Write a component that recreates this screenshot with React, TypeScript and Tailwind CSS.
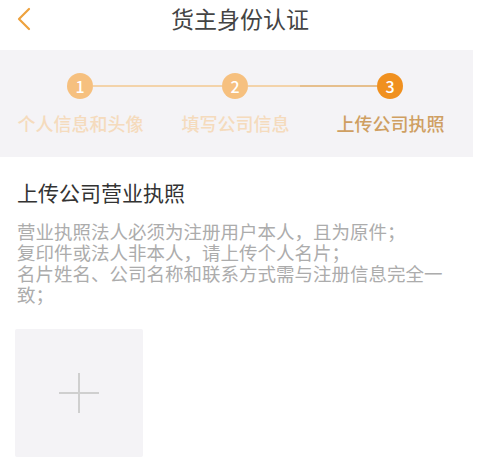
import { Fragment } from "react";

const steps = [
  { n: 1, label: "个人信息和头像", done: true },
  { n: 2, label: "填写公司信息", done: true },
  { n: 3, label: "上传公司执照", done: false },
];

const font = "font-['Noto_Sans_CJK_SC','Noto_Sans',sans-serif]";

export default function App() {
  return (
    <div className={`w-[480px] h-[474px] bg-white ${font}`}>
      {/* header */}
      <div className="relative flex h-[50px] items-center justify-center">
        <svg
          className="absolute left-[15px] top-[6px]"
          width="18"
          height="26"
          viewBox="0 0 18 26"
          fill="none"
        >
          <path d="M14 3 L4 13 L14 23" stroke="#eea23e" strokeWidth="2.2" strokeLinecap="round" strokeLinejoin="round" />
        </svg>
        <div className="-mt-[14px] text-[23px] leading-[30px] text-[#444]">货主身份认证</div>
      </div>

      {/* steps */}
      <div className="mr-[7px] h-[107px] bg-[#f4f3f6] pt-[23px]">
        <div className="flex items-center pl-[67px] pr-[70px]">
          {steps.map((s, i) => (
            <Fragment key={s.n}>
              <div
                className={`flex h-[26px] w-[26px] shrink-0 items-center justify-center rounded-full text-[16px] font-medium text-white ${
                  s.done ? "bg-[#f6c07f]" : "bg-[#f0901f]"
                }`}
              >
                {s.n}
              </div>
              {i < steps.length - 1 ? (
                i === 0 ? (
                  <div className="h-[2px] flex-1 bg-[#f3d3aa]" />
                ) : (
                  <div className="flex h-[2px] flex-1">
                    <div className="w-[52px] bg-[#f3d3aa]" />
                    <div className="flex-1 bg-[#e6bf8d]" />
                  </div>
                )
              ) : null}
            </Fragment>
          ))}
        </div>
        <div className="mt-[12px] flex pl-[3px]">
          {steps.map((s) => (
            <div
              key={s.n}
              className={`w-[155px] text-center text-[18px] font-medium leading-[24px] ${
                s.done ? "text-[#f5dbbd]" : "text-[#cf9f62]"
              }`}
            >
              {s.label}
            </div>
          ))}
        </div>
      </div>

      {/* content */}
      <div className="px-[17px] pt-[21px]">
        <div className="text-[21px] leading-[28px] text-[#333]">上传公司营业执照</div>
        <div className="mt-[15px] pr-[5px] text-[18.5px] leading-[21px] text-[#acacac]">
          营业执照法人必须为注册用户本人，且为原件；
          <br />
          复印件或法人非本人，请上传个人名片；
          <br />
          名片姓名、公司名称和联系方式需与注册信息完全一致；
        </div>
        <div className="-ml-[2px] mt-[24px] flex h-[128px] w-[128px] items-center justify-center rounded-[2px] bg-[#f4f3f6]">
          <svg width="42" height="42" viewBox="0 0 42 42">
            <path d="M21 1 V41 M1 21 H41" stroke="#cfcfcf" strokeWidth="2" />
          </svg>
        </div>
      </div>
    </div>
  );
}
